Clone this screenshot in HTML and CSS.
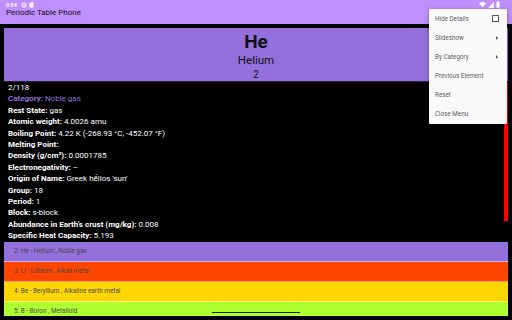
FILE: index.html
```html
<!DOCTYPE html>
<html>
<head>
<meta charset="utf-8">
<link rel="stylesheet" href="styles.css">
</head>
<body>
<div class="app">
  <div class="appbar">
    <div class="statusbar">
      <div class="status-left">
        <span class="time">9:54</span>
        <svg class="sicon" width="6" height="6" viewBox="0 0 6 6"><circle cx="3" cy="3" r="2.2" fill="none" stroke="#fff" stroke-width="1"/><circle cx="3" cy="3" r="0.8" fill="#fff"/></svg>
        <svg class="sicon" width="5" height="6" viewBox="0 0 5 6"><path d="M1.5 0.5H4.5V5.5H0.5V1.5Z" fill="#fff"/></svg>
      </div>
      <div class="status-right">
        <svg width="7" height="6" viewBox="0 0 7 6"><path d="M0 1.2Q3.5 -1 7 1.2L3.5 5.5Z" fill="#fff"/></svg>
        <svg width="6" height="6" viewBox="0 0 6 6"><path d="M6 0V6H0Z" fill="#fff"/></svg>
        <svg width="4" height="7" viewBox="0 0 4 7"><rect x="1.3" y="0" width="1.4" height="1" fill="#fff"/><rect x="0.5" y="1" width="3" height="6" rx="0.4" fill="#fff"/></svg>
      </div>
    </div>
    <div class="title">Periodic Table Phone</div>
  </div>
  <div class="screen">
    <div class="element-head">
      <div class="symbol">He</div>
      <div class="name">Helium</div>
      <div class="number">2</div>
    </div>
    <div class="details">
      <div class="line">2/118</div>
      <div class="line category"><b>Category:</b> Noble gas</div>
      <div class="line"><b>Rest State:</b> gas</div>
      <div class="line"><b>Atomic weight:</b> 4.0026 amu</div>
      <div class="line"><b>Boiling Point:</b> 4.22 K (-268.93 °C, -452.07 °F)</div>
      <div class="line"><b>Melting Point:</b></div>
      <div class="line"><b>Density (g/cm³):</b> 0.0001785</div>
      <div class="line"><b>Electronegativity:</b> –</div>
      <div class="line"><b>Origin of Name:</b> Greek hḗlios 'sun'</div>
      <div class="line"><b>Group:</b> 18</div>
      <div class="line"><b>Period:</b> 1</div>
      <div class="line"><b>Block:</b> s-block</div>
      <div class="line"><b>Abundance in Earth's crust (mg/kg):</b> 0.008</div>
      <div class="line"><b>Specific Heat Capacity:</b> 5.193</div>
      <div class="scrollthumb"></div>
    </div>
    <div class="list">
      <div class="item noble">2: He - Helium , Noble gas</div>
      <div class="item alkali">3: Li - Lithium , Alkali metal</div>
      <div class="item earth">4: Be - Beryllium , Alkaline earth metal</div>
      <div class="item metalloid">5: B - Boron , Metalloid</div>
      <div class="homebar"></div>
    </div>
  </div>
  <div class="menu">
    <div class="mitem">Hide Details <span class="checkbox"></span></div>
    <div class="mitem">Slideshow <span class="arrow"></span></div>
    <div class="mitem">By Category <span class="arrow"></span></div>
    <div class="mitem">Previous Element</div>
    <div class="mitem">Reset</div>
    <div class="mitem">Close Menu</div>
  </div>
</div>
</body>
</html>
```
FILE: styles.css
```css
html, body {
  margin: 0;
  padding: 0;
  background: #000;
}
body {
  font-family: Roboto, "Noto Sans", sans-serif;
  width: 512px;
  height: 320px;
  overflow: hidden;
}
.app {
  position: relative;
  width: 512px;
  height: 320px;
  display: flex;
  flex-direction: column;
}
.appbar {
  background: #bf8ffd;
  height: 24px;
  box-sizing: border-box;
  padding: 1px 12px 0 6px;
}
.statusbar {
  display: flex;
  justify-content: space-between;
  align-items: center;
  height: 7px;
}
.status-left, .status-right {
  display: flex;
  align-items: center;
  gap: 2px;
}
.time {
  color: #fff;
  font-size: 5.5px;
  font-weight: 500;
  margin-right: 2px;
}
.title {
  font-size: 8px;
  color: #111;
  margin-top: 0;
  line-height: 10px;
}
.screen {
  flex: 1;
  background: #000;
  display: flex;
  flex-direction: column;
  padding: 4px 4px 4px 4px;
  min-height: 0;
}
.element-head {
  background: #9370db;
  border-bottom: 1px solid #2a1f3d;
  height: 54px;
  box-sizing: border-box;
  padding-top: 3px;
  text-align: center;
  color: #111;
}
.symbol {
  font-size: 19px;
  font-weight: 700;
  line-height: 22px;
}
.name {
  font-size: 11.5px;
  line-height: 15px;
}
.number {
  font-size: 10px;
  line-height: 13px;
}
.details {
  position: relative;
  padding-left: 4px;
  color: #fff;
  font-size: 8px;
  height: 160px;
}
.line {
  line-height: 11.42px;
  height: 11.42px;
  white-space: nowrap;
}
.line b {
  font-weight: 700;
}
.category {
  color: #9370db;
}
.scrollthumb {
  position: absolute;
  right: 0;
  top: 1px;
  width: 4px;
  height: 138px;
  background: #ff0000;
}
.list {
  position: relative;
  flex: 1;
  overflow: hidden;
  display: flex;
  flex-direction: column;
}
.item {
  flex: none;
  height: 19px;
  line-height: 19px;
  border-bottom: 1px solid rgba(255, 255, 255, 0.5);
  padding-left: 10px;
  font-size: 6.4px;
  color: #4a4a4a;
}
.noble { background: #9370db; }
.alkali { background: #ff4500; }
.earth { background: #ffd700; }
.metalloid { background: #adff2f; }
.homebar {
  position: absolute;
  left: 208px;
  bottom: 3px;
  width: 88px;
  height: 1px;
  background: #222;
}
.menu {
  position: absolute;
  left: 429px;
  top: 9px;
  width: 78px;
  height: 115px;
  background: #fafafa;
  box-shadow: 0 1px 4px rgba(0, 0, 0, 0.35);
  border-radius: 1px;
  display: flex;
  flex-direction: column;
}
.mitem {
  height: 19.17px;
  display: flex;
  align-items: center;
  justify-content: space-between;
  padding: 0 9px 0 6px;
  font-size: 6.3px;
  color: #606060;
}
.checkbox {
  width: 5px;
  height: 5px;
  border: 1px solid #555;
  border-radius: 0.5px;
  margin-right: -1px;
}
.arrow {
  width: 0;
  height: 0;
  border-top: 2px solid transparent;
  border-bottom: 2px solid transparent;
  border-left: 2.5px solid #555;
  margin-right: 0;
}
```
